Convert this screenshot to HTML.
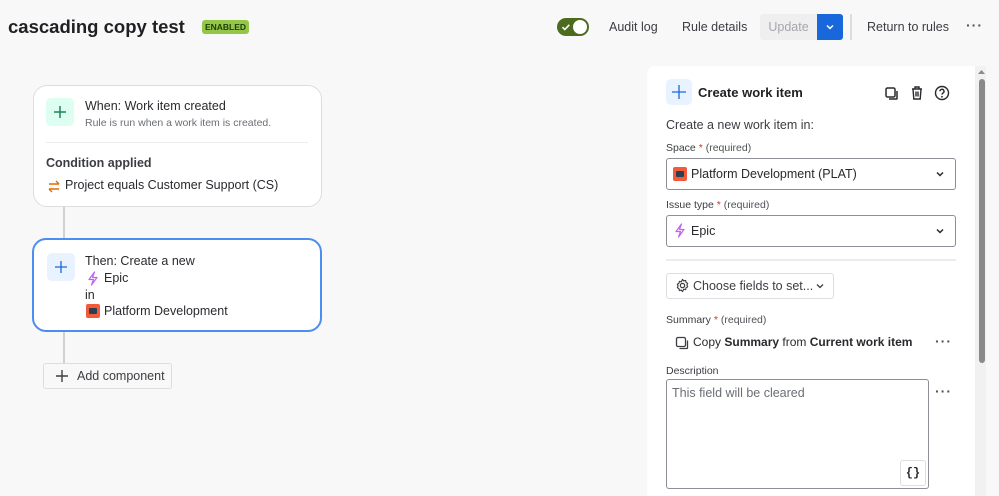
<!DOCTYPE html>
<html><head><meta charset="utf-8"><style>
*{box-sizing:border-box;margin:0;padding:0}
html,body{width:999px;height:496px;overflow:hidden}
body{background:#f8f8f8;font-family:"Liberation Sans",sans-serif;color:#292a2e;position:relative}
.a{position:absolute;white-space:nowrap}
.card{position:absolute;background:#fff;border:1px solid #dcdde0;border-radius:14px}
.ibox{position:absolute;width:28px;height:28px;border-radius:5px;display:flex;align-items:center;justify-content:center}
.sel{position:absolute;left:666px;width:290px;height:32px;border:1px solid #8c8f97;border-radius:3px;background:#fff}
.lbl{font-size:10.5px;color:#505258}
.lbl b{font-weight:normal;color:#3b3d42}
.req{color:#c9372c}
.dots{font-size:14px;letter-spacing:1px;color:#505258;font-weight:bold}
</style></head><body>
<div class="a" style="left:8px;top:16px;font-size:18.5px;font-weight:bold;color:#1f2023">cascading copy test</div>
<div class="a" style="left:202px;top:20px;width:47px;height:14px;background:#94c748;border-radius:3px;font-size:8.5px;font-weight:bold;color:#1f3b0a;text-align:center;line-height:14px">ENABLED</div>

<div class="a" style="left:557px;top:18px;width:32px;height:18px;background:#4c6b1f;border-radius:9px"></div>
<div class="a" style="left:573px;top:20px;width:14px;height:14px;background:#fff;border-radius:50%"></div>
<svg class="a" style="left:560px;top:21px" width="12" height="12" viewBox="0 0 12 12"><path d="M2.5 6.2l2.3 2.3 4.5-4.7" stroke="#fff" stroke-width="1.6" fill="none"/></svg>
<div class="a" style="left:609px;top:20px;font-size:12.5px;color:#3b3d42">Audit log</div>
<div class="a" style="left:682px;top:20px;font-size:12.5px;color:#3b3d42">Rule details</div>
<div class="a" style="left:760px;top:14px;width:57px;height:26px;background:#efeff0;border-radius:3px 0 0 3px;font-size:12.5px;color:#a5a7ac;text-align:center;line-height:26px">Update</div>
<div class="a" style="left:817px;top:14px;width:26px;height:26px;background:#1868db;border-radius:0 3px 3px 0"></div>
<svg class="a" style="left:824px;top:21px" width="12" height="12"><path d="M3 4.5l3 3 3-3" stroke="#fff" stroke-width="1.5" fill="none"/></svg>
<div class="a" style="left:850px;top:14px;width:2px;height:26px;background:#dcdde0"></div>
<div class="a" style="left:867px;top:20px;font-size:12.5px;color:#3b3d42">Return to rules</div>
<div class="a dots" style="left:966px;top:17px">···</div>

<div class="a" style="left:63px;top:206px;width:2px;height:34px;background:#d0d1d4"></div>
<div class="a" style="left:63px;top:331px;width:2px;height:33px;background:#d0d1d4"></div>

<div class="card" style="left:33px;top:85px;width:289px;height:122px">
 <div class="ibox" style="left:12px;top:12px;background:#dcfff1"><svg width="16" height="16"><path d="M8 2v12M2 8h12" stroke="#1f845a" stroke-width="1.5"/></svg></div>
 <div class="a" style="left:51px;top:13px;font-size:12.5px">When: Work item created</div>
 <div class="a" style="left:51px;top:31px;font-size:10.5px;color:#6b6e76">Rule is run when a work item is created.</div>
 <div class="a" style="left:12px;top:56px;width:262px;height:1px;background:#ebecf0"></div>
 <div class="a" style="left:12px;top:70px;font-size:12.5px;font-weight:bold;color:#3b3d42">Condition applied</div>
 <svg class="a" style="left:13px;top:93px" width="14" height="14"><path d="M2 5h10M9 2l3 3M12 10H2M5 13l-3-3" stroke="#e06c00" stroke-width="1.4" fill="none"/></svg>
 <div class="a" style="left:31px;top:92px;font-size:12.5px">Project equals Customer Support (CS)</div>
</div>

<div class="card" style="left:32px;top:238px;width:290px;height:94px;border:2px solid #4c8ef0">
 <div class="ibox" style="left:13px;top:13px;background:#e9f2ff"><svg width="16" height="16"><path d="M8 2v12M2 8h12" stroke="#1868db" stroke-width="1.3"/></svg></div>
 <div class="a" style="left:51px;top:14px;font-size:12.5px">Then: Create a new</div>
 <svg class="a" style="left:52px;top:31px" width="14" height="15"><path d="M8.5 1L3 8.5h4.5L5.5 14 11 6.5H6.5z" stroke="#bf63f3" stroke-width="1.2" fill="none" stroke-linejoin="round"/></svg>
 <div class="a" style="left:70px;top:31px;font-size:12.5px">Epic</div>
 <div class="a" style="left:51px;top:48px;font-size:12.5px">in</div>
 <div class="a" style="left:52px;top:64px;width:14px;height:14px;background:#f15b3b;border-radius:2px"><div style="position:absolute;left:3px;top:4px;width:8px;height:6px;background:#2c3e50;border-radius:1px"></div></div>
 <div class="a" style="left:70px;top:64px;font-size:12.5px">Platform Development</div>
</div>

<div class="a" style="left:43px;top:363px;width:129px;height:26px;border:1px solid #dcdde0;background:#f8f8f8;border-radius:3px"></div>
<svg class="a" style="left:54px;top:368px" width="16" height="16"><path d="M8 2v12M2 8h12" stroke="#3b3d42" stroke-width="1.4"/></svg>
<div class="a" style="left:77px;top:369px;font-size:12.5px;color:#3b3d42">Add component</div>

<div class="a" style="left:647px;top:66px;width:328px;height:430px;background:#fff;border-radius:8px 0 0 0"></div>
<div class="a" style="left:975px;top:66px;width:11px;height:430px;background:#f1f1f1"></div>
<div class="a" style="left:979px;top:79px;width:6px;height:284px;background:#8a8a8a;border-radius:3px"></div>
<svg class="a" style="left:977px;top:68px" width="9" height="7"><path d="M1 6l3.5-4L8 6z" fill="#8a8a8a"/></svg>

<div class="ibox" style="left:666px;top:79px;width:26px;height:26px;background:#e9f2ff"><svg width="16" height="16"><path d="M8 1v14M1 8h14" stroke="#1868db" stroke-width="1.3"/></svg></div>
<div class="a" style="left:698px;top:85px;font-size:13px;font-weight:bold;color:#1f2023">Create work item</div>
<svg class="a" style="left:884px;top:86px" width="16" height="16"><rect x="2" y="2" width="9" height="9" rx="1.5" stroke="#292a2e" stroke-width="1.5" fill="none"/><path d="M13 5v7.5a.5.5 0 01-.5.5H5" stroke="#292a2e" stroke-width="1.5" fill="none"/></svg>
<svg class="a" style="left:909px;top:85px" width="16" height="16"><path d="M3 4h10M6 4V2h4v2M4 4l.8 10h6.4L12 4M7 6.5v5M9 6.5v5" stroke="#292a2e" stroke-width="1.4" fill="none"/></svg>
<svg class="a" style="left:934px;top:85px" width="16" height="16"><circle cx="8" cy="8" r="6.5" stroke="#292a2e" stroke-width="1.4" fill="none"/><path d="M6 6.3a2 2 0 113 1.7c-.7.4-1 .8-1 1.6" stroke="#292a2e" stroke-width="1.4" fill="none"/><circle cx="8" cy="11.8" r=".9" fill="#292a2e"/></svg>

<div class="a" style="left:666px;top:118px;font-size:12.5px;color:#3b3d42">Create a new work item in:</div>
<div class="a lbl" style="left:666px;top:142px"><b>Space</b> <span class="req">*</span> (required)</div>
<div class="sel" style="top:158px"></div>
<div class="a" style="left:673px;top:167px;width:14px;height:14px;background:#f15b3b;border-radius:2px"><div style="position:absolute;left:3px;top:4px;width:8px;height:6px;background:#2c3e50;border-radius:1px"></div></div>
<div class="a" style="left:691px;top:167px;font-size:12.5px">Platform Development (PLAT)</div>
<svg class="a" style="left:934px;top:168px" width="12" height="12"><path d="M3 4.5l3 3 3-3" stroke="#292a2e" stroke-width="1.5" fill="none"/></svg>

<div class="a lbl" style="left:666px;top:199px"><b>Issue type</b> <span class="req">*</span> (required)</div>
<div class="sel" style="top:215px"></div>
<svg class="a" style="left:673px;top:223px" width="14" height="15"><path d="M8.5 1L3 8.5h4.5L5.5 14 11 6.5H6.5z" stroke="#bf63f3" stroke-width="1.2" fill="none" stroke-linejoin="round"/></svg>
<div class="a" style="left:691px;top:224px;font-size:12.5px">Epic</div>
<svg class="a" style="left:934px;top:225px" width="12" height="12"><path d="M3 4.5l3 3 3-3" stroke="#292a2e" stroke-width="1.5" fill="none"/></svg>

<div class="a" style="left:666px;top:259px;width:290px;height:2px;background:#ebecf0"></div>

<div class="a" style="left:666px;top:273px;width:168px;height:26px;border:1px solid #dcdde0;border-radius:3px;background:#fff"></div>
<svg class="a" style="left:675px;top:278px" width="15" height="15" viewBox="0 0 16 16"><circle cx="8" cy="8" r="2.3" stroke="#3b3d42" stroke-width="1.3" fill="none"/><path d="M8 1.5l1.3 1.6 2-.5.5 2 1.7 1.1-.8 1.8.8 1.8-1.7 1.1-.5 2-2-.5L8 14.5l-1.3-1.6-2 .5-.5-2-1.7-1.1.8-1.8-.8-1.8 1.7-1.1.5-2 2 .5z" stroke="#3b3d42" stroke-width="1.2" fill="none" stroke-linejoin="round"/></svg>
<div class="a" style="left:693px;top:279px;font-size:12.5px;color:#3b3d42">Choose fields to set...</div>
<svg class="a" style="left:814px;top:280px" width="12" height="12"><path d="M3 4.5l3 3 3-3" stroke="#3b3d42" stroke-width="1.3" fill="none"/></svg>

<div class="a lbl" style="left:666px;top:314px"><b>Summary</b> <span class="req">*</span> (required)</div>
<svg class="a" style="left:675px;top:336px" width="14" height="14"><rect x="1.5" y="1.5" width="9" height="9" rx="1.5" stroke="#3b3d42" stroke-width="1.3" fill="none"/><path d="M12.5 4.5v7.5a.5.5 0 01-.5.5H4.5" stroke="#3b3d42" stroke-width="1.3" fill="none"/></svg>
<div class="a" style="left:693px;top:335px;font-size:12px">Copy <b>Summary</b> from <b>Current work item</b></div>
<div class="a dots" style="left:935px;top:333px">···</div>

<div class="a lbl" style="left:666px;top:365px"><b>Description</b></div>
<div class="a" style="left:666px;top:379px;width:263px;height:110px;border:1px solid #8c8f97;border-radius:3px;background:#fff"></div>
<div class="a" style="left:672px;top:386px;font-size:12.5px;color:#6b6e76">This field will be cleared</div>
<div class="a dots" style="left:935px;top:383px">···</div>
<div class="a" style="left:900px;top:460px;width:26px;height:26px;border:1px solid #dcdde0;border-radius:3px;background:#fff;font-size:12px;font-weight:bold;text-align:center;line-height:24px;font-family:'Liberation Mono',monospace">{}</div>
</body></html>
